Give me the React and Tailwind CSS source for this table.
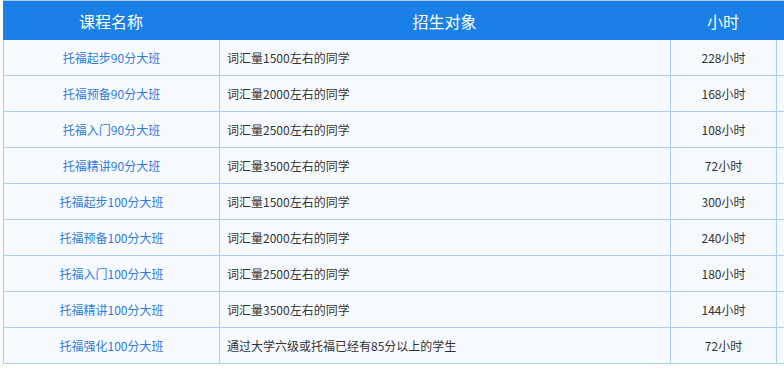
import React from "react";

const rows = [
  ["托福起步90分大班", "词汇量1500左右的同学", "228小时"],
  ["托福预备90分大班", "词汇量2000左右的同学", "168小时"],
  ["托福入门90分大班", "词汇量2500左右的同学", "108小时"],
  ["托福精讲90分大班", "词汇量3500左右的同学", "72小时"],
  ["托福起步100分大班", "词汇量1500左右的同学", "300小时"],
  ["托福预备100分大班", "词汇量2000左右的同学", "240小时"],
  ["托福入门100分大班", "词汇量2500左右的同学", "180小时"],
  ["托福精讲100分大班", "词汇量3500左右的同学", "144小时"],
  ["托福强化100分大班", "通过大学六级或托福已经有85分以上的学生", "72小时"],
];

const cols = "grid grid-cols-[216px_451px_106px_1fr]";

export default function App() {
  return (
    <div
      className="w-[784px] h-[370px] bg-white pl-[3px] overflow-hidden"
      style={{ fontFamily: '"Microsoft YaHei", "Noto Sans CJK SC", "Noto Sans", sans-serif' }}
    >
      <div className="border-t border-[#a9cdf3]">
        {/* header */}
        <div className={`${cols} h-[39px] bg-[#1a80e8] text-white text-[16px]`}>
          <div className="flex items-center justify-center">课程名称</div>
          <div className="flex items-center justify-center">招生对象</div>
          <div className="flex items-center justify-center">小时</div>
          <div />
        </div>

        {/* body */}
        {rows.map((r, i) => (
          <div
            key={i}
            className={`${cols} h-[36px] bg-[#f7fbff] border-b border-[#a9cdf3] text-[12px]`}
          >
            <div className="flex items-center justify-center border-l border-[#a9cdf3] text-[#2f7ae0]">
              {r[0]}
            </div>
            <div className="flex items-center border-l border-[#a9cdf3] pl-[7px] text-[#333]">
              {r[1]}
            </div>
            <div className="flex items-center justify-center border-l border-[#a9cdf3] text-[#333]">
              {r[2]}
            </div>
            <div className="border-l border-[#a9cdf3]" />
          </div>
        ))}
      </div>
    </div>
  );
}
